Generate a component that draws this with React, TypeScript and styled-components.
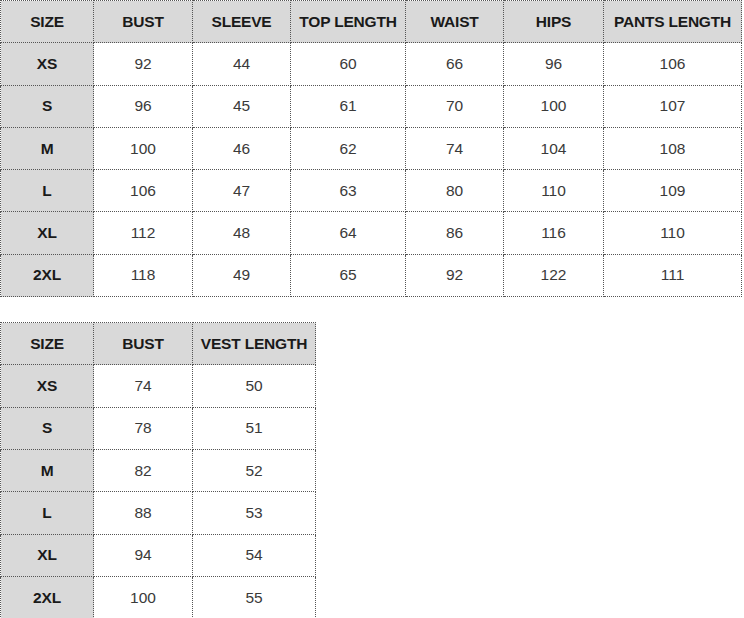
import React from "react";
import styled, { createGlobalStyle } from "styled-components";

const Global = createGlobalStyle`
  html, body { margin: 0; padding: 0; background: #fff; }
  body { font-family: "Liberation Sans", Arial, sans-serif; }
`;

const Page = styled.div`
  display: flex;
  flex-direction: column;
  align-items: flex-start;
  gap: 25px;
  padding: 0;
`;

const Table = styled.table`
  border-collapse: collapse;
  table-layout: fixed;
  border: 1px dotted #555;
`;

const Cell = styled.td<{ $head?: boolean }>`
  border: 1px dotted #555;
  height: 42.3px;
  padding: 0;
  box-sizing: border-box;
  text-align: center;
  vertical-align: middle;
  font-size: 15.5px;
  color: ${(p) => (p.$head ? "#1a1a1a" : "#3a3a3a")};
  font-weight: ${(p) => (p.$head ? 700 : 400)};
  letter-spacing: ${(p) => (p.$head ? "-0.2px" : "0")};
  background: ${(p) => (p.$head ? "#d9d9d9" : "#fff")};
  white-space: nowrap;
`;

type Props = { widths: number[]; headers: string[]; rows: (string | number)[][] };

const SizeTable = ({ widths, headers, rows }: Props) => (
  <Table style={{ width: widths.reduce((a, b) => a + b, 0) }}>
    <colgroup>
      {widths.map((w, i) => (
        <col key={i} style={{ width: w }} />
      ))}
    </colgroup>
    <tbody>
      <tr>
        {headers.map((h) => (
          <Cell key={h} $head>
            {h}
          </Cell>
        ))}
      </tr>
      {rows.map((r, i) => (
        <tr key={i}>
          {r.map((v, j) => (
            <Cell key={j} $head={j === 0}>
              {v}
            </Cell>
          ))}
        </tr>
      ))}
    </tbody>
  </Table>
);

const top = {
  widths: [93, 99, 98, 115, 98, 100, 138],
  headers: ["SIZE", "BUST", "SLEEVE", "TOP LENGTH", "WAIST", "HIPS", "PANTS LENGTH"],
  rows: [
    ["XS", 92, 44, 60, 66, 96, 106],
    ["S", 96, 45, 61, 70, 100, 107],
    ["M", 100, 46, 62, 74, 104, 108],
    ["L", 106, 47, 63, 80, 110, 109],
    ["XL", 112, 48, 64, 86, 116, 110],
    ["2XL", 118, 49, 65, 92, 122, 111],
  ],
};

const vest = {
  widths: [93, 99, 123],
  headers: ["SIZE", "BUST", "VEST LENGTH"],
  rows: [
    ["XS", 74, 50],
    ["S", 78, 51],
    ["M", 82, 52],
    ["L", 88, 53],
    ["XL", 94, 54],
    ["2XL", 100, 55],
  ],
};

export default function App() {
  return (
    <>
      <Global />
      <Page>
        <SizeTable {...top} />
        <SizeTable {...vest} />
      </Page>
    </>
  );
}
